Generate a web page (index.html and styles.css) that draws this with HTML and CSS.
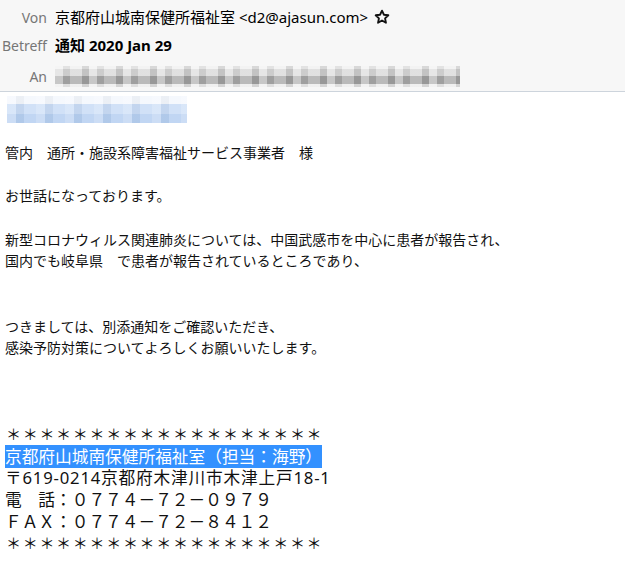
FILE: index.html
```html
<!DOCTYPE html>
<html lang="ja">
<head>
<meta charset="utf-8">
<link rel="stylesheet" href="styles.css">
</head>
<body>
<div class="header">
  <div class="row">
    <div class="label">Von</div>
    <div class="value"><span class="cjk">京都府山城南保健所福祉室</span> &lt;d2@ajasun.com&gt;<svg class="star" width="16" height="16" viewBox="0 0 24 24"><path d="M12 2.5l2.9 6.1 6.6.8-4.9 4.6 1.3 6.6L12 17.3l-5.9 3.3 1.3-6.6-4.9-4.6 6.6-.8z" fill="none" stroke="#111" stroke-width="2.8" stroke-linejoin="round"/></svg></div>
  </div>
  <div class="row">
    <div class="label">Betreff</div>
    <div class="value bold"><span class="cjk">通知</span> 2020 Jan 29</div>
  </div>
  <div class="row row-an">
    <div class="label">An</div>
    <div class="value"><div class="blur-gray"></div></div>
  </div>
</div>
<div class="body">
  <div class="blur-blue"></div>
  <div class="text">
    <p>管内　通所・施設系障害福祉サービス事業者　様</p>
    <p class="blank"></p>
    <p>お世話になっております。</p>
    <p class="blank"></p>
    <p>新型コロナウィルス関連肺炎については、中国武感市を中心に患者が報告され、</p>
    <p>国内でも岐阜県　で患者が報告されているところであり、</p>
    <p class="blank"></p>
    <p class="blank"></p>
    <p>つきましては、別添通知をご確認いただき、</p>
    <p>感染予防対策についてよろしくお願いいたします。</p>
    <p class="blank"></p>
    <p class="blank"></p>
    <p class="blank"></p>
  </div>
  <div class="sig">
    <p class="stars">＊＊＊＊＊＊＊＊＊＊＊＊＊＊＊＊＊＊＊</p>
    <p><span class="sel">京都府山城南保健所福祉室（担当：海野）</span></p>
    <p class="addr">〒619-0214京都府木津川市木津上戸18-1</p>
    <p>電　話：０７７４－７２－０９７９</p>
    <p>ＦＡＸ：０７７４－７２－８４１２</p>
    <p class="stars">＊＊＊＊＊＊＊＊＊＊＊＊＊＊＊＊＊＊＊</p>
  </div>
</div>
</body>
</html>
```

FILE: styles.css
```css
html, body {
  margin: 0;
  padding: 0;
  background: #ffffff;
}
body {
  font-family: "Noto Sans", "Noto Sans CJK JP", sans-serif;
  color: #000;
  width: 625px;
  height: 579px;
  overflow: hidden;
}
.header {
  background: #f7f7f7;
  border-bottom: 1px solid #cdd4dc;
  padding-top: 3px;
  height: 88px;
  box-sizing: content-box;
}
.row {
  display: flex;
  align-items: center;
  height: 28px;
  font-size: 14px;
}
.row-an {
  margin-top: 3px;
}
.label {
  width: 47px;
  text-align: right;
  color: #767676;
  flex: none;
}
.value {
  margin-left: 8px;
  white-space: nowrap;
  line-height: 20px;
  font-size: 15px;
}
.value .cjk {
  font-size: 15px;
}
.bold {
  font-weight: 700;
}
.star {
  margin-left: 6px;
  vertical-align: -2px;
}
.blur-gray {
  width: 405px;
  height: 21px;
  background:
    repeating-linear-gradient(90deg, rgba(255,255,255,0.35) 0 8px, rgba(0,0,0,0.06) 8px 15px, rgba(255,255,255,0.2) 15px 27px, rgba(0,0,0,0.1) 27px 34px),
    linear-gradient(to bottom, #f0f0f0 0 3px, #d9d9d9 3px 10px, #a9a9a9 10px 18px, #ececec 18px);
}
.body {
  padding: 4px 0 0 5px;
}
.blur-blue {
  width: 180px;
  height: 27px;
  margin-left: 2px;
  background:
    repeating-linear-gradient(90deg, rgba(255,255,255,0.3) 0 9px, rgba(0,0,0,0.03) 9px 17px, rgba(255,255,255,0.15) 17px 29px),
    linear-gradient(to bottom, #f3f7fd 0 8px, #c9dcf6 8px 18px, #b6cff1 18px);
}
.text {
  margin-top: 19px;
  font-size: 14px;
  line-height: 21.7px;
  color: #111;
}
p {
  margin: 0;
  white-space: pre;
}
.blank {
  height: 21.7px;
}
.sig {
  font-size: 16.7px;
  line-height: 21.7px;
  color: #111;
}
.stars {
  font-size: 15px;
  letter-spacing: 1.7px;
  padding-left: 1px;
}
.addr {
  letter-spacing: 0.8px;
}
.sel {
  background: #3391ff;
  color: #fff;
}
```
